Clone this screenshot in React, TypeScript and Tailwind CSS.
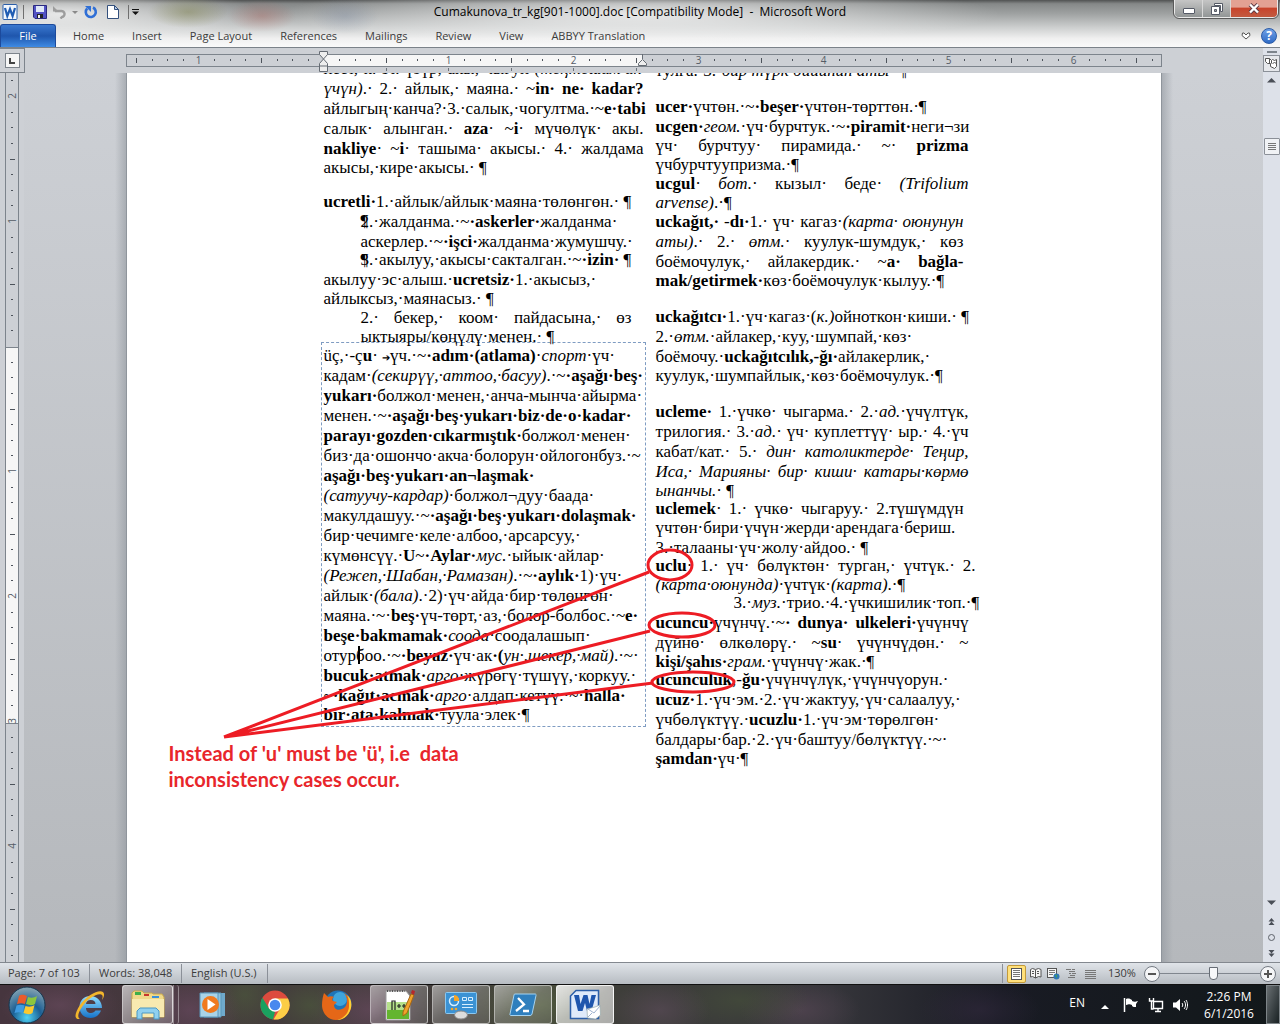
import React from "react";

type LineData = {
  t: string;
  h?: 15 | 18 | 19 | 20;
  just?: "wide" | "mid" | "narrow";
  indent?: boolean;
  far?: boolean;
  gap?: boolean;
};

const HEIGHTS = { 15: "h-[15px]", 18: "h-[18px]", 19: "h-[19px]", 20: "h-5" };
const WIDTHS = { wide: "w-[320px]", mid: "w-[313px]", narrow: "w-[308px]" };

/* "*bold*", "_italic_", a blank is drawn as a space mark, "#" is a plain blank */
function Rich({ text, just }: { text: string; just: boolean }) {
  const marks = (s: string) => s.replace(/ /g, just ? "· " : "·").replace(/#/g, " ");
  return (
    <>
      {text.split(/(\*[^*]*\*|_[^_]*_|➔)/).map((part, i) => {
        if (part === "➔") return <span key={i} className="text-[10px]">➔</span>;
        if (part.startsWith("*")) return <b key={i}>{marks(part.slice(1, -1))}</b>;
        if (part.startsWith("_")) return <i key={i}>{marks(part.slice(1, -1))}</i>;
        return <React.Fragment key={i}>{marks(part)}</React.Fragment>;
      })}
    </>
  );
}

function Line({ l }: { l: LineData }) {
  const cls = [
    HEIGHTS[l.h ?? 20],
    "whitespace-nowrap",
    l.indent ? "ml-[37px]" : "",
    l.far ? "ml-[78px]" : "",
    l.gap ? "mb-4" : "",
    l.just ? "[text-align-last:justify]" : "",
    l.just ? (l.indent ? "w-[271px]" : WIDTHS[l.just]) : "",
  ].join(" ");
  return (
    <p className={cls}>
      <Rich text={l.t} just={!!l.just} />
    </p>
  );
}

const leftTop: LineData[] = [
  { t: "иеет, к. эт. үзүр, акы, чыгуп _(теңтешим ин_" },
  { t: "_үчүн)_. 2. айлык, маяна. ~*in ne kadar?*", just: "wide" },
  { t: "айлыгың канча? 3. салык, чогултма. ~*e tabi*" },
  { t: "салык алынган. *aza* ~*i* мүчөлүк акы.", just: "wide" },
  { t: "*nakliye* ~*i* ташыма акысы. 4. жалдама", just: "wide", h: 19 },
  { t: "акысы, кире акысы. #¶", gap: true, h: 18 },
  { t: "*ucretli *1. айлык/айлык маяна төлөнгөн. #¶" },
  { t: "2. жалданма. ~* askerler *жалданма ", indent: true },
  { t: "аскерлер. ~* işci *жалданма жумушчу. ", indent: true, h: 18 },
  { t: "3. акылуу, акысы сакталган. ~* izin *#¶", indent: true },
  { t: "акылуу эс алыш. *ucretsiz *1. акысыз, ", h: 19 },
  { t: "айлыксыз, маянасыз. #¶", h: 19 },
  { t: "2. бекер, коом пайдасына, өз", indent: true, just: "mid", h: 19 },
  { t: "ыктыяры/көңүлү менен. #¶", indent: true, h: 15 },
];

const frameLines: LineData[] = [
  { t: "üç, -ç*u* #➔үч. ~* adım (atlama)* _спорт_ үч " },
  { t: "кадам _(секирүү, аттоо, басуу)_. ~* aşağı beş *" },
  { t: "*yukarı *болжол менен, анча-мынча айырма " },
  { t: "менен. ~* aşağı beş yukarı biz de o kadar *" },
  { t: "*parayı gozden cıkarmıştık *болжол менен " },
  { t: "биз да ошончо акча болорун ойлогонбуз. ~" },
  { t: "*aşağı beş yukarı an¬laşmak *" },
  { t: "_(сатуучу-кардар)_ болжол¬дуу баада " },
  { t: "макулдашуу. ~* aşağı beş yukarı dolaşmak *" },
  { t: "бир чечимге келе албоо, арсарсуу, " },
  { t: "күмөнсүү. *U*~* Aylar *_мус._ ыйык айлар " },
  { t: "_(Режеп, Шабан, Рамазан)_. ~* aylık *1) үч " },
  { t: "айлык _(бала)_. 2) үч айда бир төлөнгөн " },
  { t: "маяна. ~ *beş *үч-төрт, аз, болор-болбос. ~*e *" },
  { t: "*beşe bakmamak *_соода_ соодалашып " },
  { t: "отурбоо. ~* beyaz *үч ак* (*_ун ,шекер, май)_. ~ " },
  { t: "*bucuk atmak *_арго_ жүрөгү түшүү, коркуу. " },
  { t: "~* kağıt acmak *_арго_ алдап кетүү. ~ *halla *", h: 19 },
  { t: "*bir ata kalmak *туула элек ¶" },
];

const rightLines: LineData[] = [
  { t: "тулга. 3. _бир түрк бийинин аты_ #¶", gap: true },
  { t: "*ucer *үчтөн. ~* beşer *үчтөн-төрттөн. ¶" },
  { t: "*ucgen *_геом._ үч бурчтук. ~* piramit *неги¬зи", h: 19 },
  { t: "үч бурчтуу пирамида. ~ *prizma*", just: "mid", h: 19 },
  { t: "үчбурчтуупризма. ¶", h: 19 },
  { t: "*ucgul* _бот._ кызыл беде _(Trifolium_", just: "mid", h: 19 },
  { t: "_arvense)_. ¶", h: 19 },
  { t: "*uckağıt, *-*dı·*1.·#үч·#кагаз·_(карта·#оюнунун_", just: "narrow" },
  { t: "_аты)_. 2. _өтм._ куулук-шумдук, көз", just: "narrow" },
  { t: "боёмочулук, айлакердик. ~*a bağla-*", just: "narrow", h: 19 },
  { t: "*mak/getirmek *көз боёмочулук кылуу. ¶", gap: true },
  { t: "*uckağıtcı *1. үч кагаз (_к.)_ойноткон киши. #¶" },
  { t: "2. _өтм._ айлакер, куу, шумпай, көз " },
  { t: "боёмочу. *uckağıtcılık,-ğı *айлакерлик, ", h: 19 },
  { t: "куулук, шумпайлык, көз боёмочулук. ¶", gap: true },
  { t: "*ucleme·*#1.·үчкө·#чыгарма.·#2.·_ад._·үчүлтүк,", just: "mid" },
  { t: "трилогия.·#3.·_ад._·#үч·#куплеттүү·#ыр.·#4.·үч", just: "mid" },
  { t: "кабат/кат. 5. _дин католиктерде Теңир,_", just: "mid" },
  { t: "_Иса,·#Марияны·#бир·#киши·#катары·көрмө_", just: "mid", h: 19 },
  { t: "_ынанчы._ #¶", h: 18 },
  { t: "*uclemek* 1. үчкө чыгаруу. 2.түшүмдүн", just: "narrow", h: 19 },
  { t: "үчтөн бири үчүн жерди арендага бериш." },
  { t: "3. талааны үч жолу айдоо. #¶", h: 18 },
  { t: "*uclu* 1. үч бөлүктөн турган, үчтүк. 2.", just: "wide", h: 19 },
  { t: "_(карта оюнунда)_ үчтүк _(карта)_. ¶", h: 18 },
  { t: "3. _муз._ трио. 4. үчкишилик топ. ¶", far: true },
  { t: "*ucuncu·*үчүнчү.·~*·#dunya·#ulkeleri·*үчүнчү", just: "mid" },
  { t: "дүйнө өлкөлөрү. ~*su* үчүнчүдөн. ~", just: "mid", h: 19 },
  { t: "*kişi/şahıs *_грам._ үчүнчү жак. ¶", h: 18 },
  { t: "*ucunculuk*,-*ğu *үчүнчүлүк, үчүнчүорун. " },
  { t: "*ucuz *1. үч эм. 2. үч жактуу, үч салаалуу, " },
  { t: "үчбөлүктүү. *ucuzlu *1. үч эм төрөлгөн " },
  { t: "балдары бар. 2. үч баштуу/бөлүктүү. ~ ", h: 19 },
  { t: "*şamdan *үч ¶" },
];

const tabs = ["Home", "Insert", "Page Layout", "References", "Mailings", "Review", "View", "ABBYY Translation"];

function WordMark() {
  return (
    <svg width="16" height="16" viewBox="0 0 16 16">
      <rect x="1" y="0.5" width="14" height="15" rx="1" fill="#f2f7fd" stroke="#2b5ea8" />
      <path d="M3 4l2.300 8L8 5l2.600 7L13 4" fill="none" stroke="#1f5cb3" strokeWidth="2.2" />
    </svg>
  );
}

function TitleBar() {
  return (
    <div className="relative flex h-6 items-start">
      <div className="flex h-6 items-center gap-[5px] pl-0.5">
        <WordMark />
        <span className="h-3.5 w-px bg-[#6f6f6f]" />
        <button aria-label="Save" className="ml-1">
          <svg width="14" height="14" viewBox="0 0 14 14">
            <path d="M.5.5h13v13H2l-1.500-1.500z" fill="#5252c4" stroke="#2a2a80" />
            <rect x="3" y="1" width="8" height="6" fill="#dfe8f8" />
            <rect x="4" y="9" width="6" height="4" fill="#222" />
            <rect x="5" y="10" width="2" height="3" fill="#eee" />
          </svg>
        </button>
        <button aria-label="Undo" className="ml-px">
          <svg width="14" height="13" viewBox="0 0 14 13">
            <path d="M2 5h6a3 3 0 0 1 1 6l-1.500 1.500" fill="none" stroke="#9d9d9d" strokeWidth="2.4" />
            <path d="M0 5.500V0l6 6z" fill="#9d9d9d" />
          </svg>
        </button>
        <svg width="6" height="3" viewBox="0 0 6 3"><path d="M0 0h6L3 3z" fill="#8a8a8a" /></svg>
        <button aria-label="Repeat" className="ml-px">
          <svg width="14" height="14" viewBox="0 0 14 14">
            <path d="M9 2.500A5 5 0 1 1 3.200 3.500" fill="none" stroke="#2f6fd6" strokeWidth="2.6" />
            <path d="M1 1h6v6z" fill="#2f6fd6" />
          </svg>
        </button>
        <button aria-label="New" className="ml-1">
          <svg width="12" height="14" viewBox="0 0 12 14">
            <path d="M.5.5h7l4 4v9H.5z" fill="#fff" stroke="#33507d" />
            <path d="M7.500.5v4h4z" fill="#b9cdea" stroke="#33507d" />
          </svg>
        </button>
        <span className="ml-1 h-3.5 w-px bg-[#6f6f6f]" />
        <button aria-label="Customize Quick Access Toolbar" className="-ml-0.5">
          <svg width="7" height="6" viewBox="0 0 7 6"><path d="M0 .5h7" stroke="#111" /><path d="M0 2.500h7L3.500 6z" fill="#111" /></svg>
        </button>
      </div>
      <h1 className="pointer-events-none absolute inset-x-0 top-0 text-center text-[12px] leading-6 whitespace-pre text-black">
        {"Cumakunova_tr_kg[901-1000].doc [Compatibility Mode]  -  Microsoft Word"}
      </h1>
      <div className="ml-auto mr-0.5 flex h-[18px] overflow-hidden rounded-b-[5px] border border-t-0 border-[#e9e9e9] outline outline-1 outline-[#5a5a5a]">
        <button aria-label="Minimize" className="flex w-7 items-center justify-center border-r border-[#d8d8d8] bg-linear-to-b from-[#c5c5c5] to-[#929696]">
          <span className="mt-1 h-1.5 w-3 rounded-[1px] border border-[#555a66] bg-white" />
        </button>
        <button aria-label="Restore" className="flex w-7 items-center justify-center border-r border-[#d8d8d8] bg-linear-to-b from-[#c5c5c5] to-[#929696]">
          <svg width="12" height="12" viewBox="0 0 12 12">
            <path d="M3.500.5h8v8h-2v-6h-6z" fill="#fff" stroke="#555a66" />
            <path d="M.5 3.500h8v8h-8zM3.500 6.500v2h2v-2z" fill="#fff" fillRule="evenodd" stroke="#555a66" />
          </svg>
        </button>
        <button aria-label="Close" className="flex w-[46px] items-center justify-center bg-linear-to-b from-[#e3a193] from-40% via-[#c8442c] via-50% to-[#c25a40]">
          <svg width="12" height="11" viewBox="0 0 12 11">
            <path d="M2 1.500l8 8M10 1.500l-8 8" stroke="#5b3a44" strokeWidth="4" />
            <path d="M2 1.500l8 8M10 1.500l-8 8" stroke="#fff" strokeWidth="2.4" />
          </svg>
        </button>
      </div>
    </div>
  );
}

function Ribbon() {
  return (
    <div className="flex h-[23px] items-stretch text-[11px] text-[#3b3b3b]">
      <button className="mr-[3px] w-14 rounded-t-[3px] border border-b-0 border-[#1c4a9c] bg-linear-to-b from-[#3a78cf] via-[#1f56ad] to-[#3f8be4] text-white">
        File
      </button>
      <nav className="flex">
        {tabs.map((t) => (
          <button key={t} className="px-[14px] pt-px">{t}</button>
        ))}
      </nav>
      <div className="ml-auto flex items-center gap-2.5 pr-[3px]">
        <button aria-label="Minimize the Ribbon">
          <svg width="10" height="8" viewBox="0 0 10 8">
            <path d="M1.500 1l1.500 0 2 2 2-2h1.500l.5 2.500-4 3.500-4-3.500z" fill="#fff" stroke="#555" />
          </svg>
        </button>
        <button aria-label="Help" className="size-4 rounded-full border border-[#2b5ba6] bg-linear-to-b from-[#6ea0e6] to-[#2f6bc6] text-[12px] leading-[14px] font-bold text-white">
          ?
        </button>
      </div>
    </div>
  );
}

function HRuler() {
  const ticks: React.ReactNode[] = [];
  for (let k = -12; k <= 53; k++) {
    const x = 197.5 + k * 15.625;
    if (x < 6 || x > 1030) continue;
    if (k % 8 === 0) {
      if (k !== 0)
        ticks.push(
          <text key={k} x={x} y="10" textAnchor="middle" fontSize="10" fill="#555c66">
            {Math.abs(k / 8)}
          </text>,
        );
    } else {
      const long = k % 4 === 0;
      const px = Math.round(x);
      ticks.push(<rect key={k} x={px} y={long ? 4 : 5} width="1" height={long ? 5 : 2} fill="#4d535b" />);
    }
  }
  return (
    <svg width="1036" height="25" viewBox="0 -6 1036 25" className="shrink-0">
      <rect x="0.5" y="0.5" width="1035" height="12" fill="#cdd0d5" stroke="#7d848c" />
      <rect x="198" y="1" width="319" height="11" fill="#f6f6f6" />
      {ticks}
      {[260, 322, 385, 447, 510].map((x) => (
        <rect key={x} x={x} y="14" width="1" height="3" fill="#6d737b" />
      ))}
      <path d="M193.500-2.500h8v3l-4 4.500 4 4.500v8h-8v-8l4-4.500-4-4.500z" fill="#eee" stroke="#666c74" />
      <path d="M193.500 12h8" stroke="#666c74" />
      <path d="M512.500 11.500v-2l4-4 4 4v2z" fill="#eee" stroke="#666c74" />
      <path d="M516.500 0v5" stroke="#666c74" />
    </svg>
  );
}

function VRuler() {
  const ticks: React.ReactNode[] = [];
  for (let k = -17; k <= 39; k++) {
    const y = 274 + k * 15.625;
    if (y < 3 || y > 885) continue;
    if (k % 8 === 0) {
      if (k !== 0)
        ticks.push(
          <text key={k} transform={`translate(11 ${Math.round(y - 1)}) rotate(-90)`} textAnchor="middle" fontSize="10" fill="#555c66">
            {Math.abs(k / 8)}
          </text>,
        );
    } else {
      const long = k % 4 === 0;
      ticks.push(<rect key={k} x={long ? 5 : 6} y={Math.round(y - 1)} width={long ? 5 : 2} height="1" fill="#4d535b" />);
    }
  }
  return (
    <svg width="14" height="889" viewBox="0 0 14 889" className="ml-[5px] shrink-0">
      <rect x="0.5" y="-2" width="13" height="893" fill="#cdd0d5" stroke="#7d848c" />
      <rect x="1" y="274" width="12" height="377" fill="#f6f6f6" />
      <path d="M1 274.500h12M1 650.500h12" stroke="#7d848c" />
      {ticks}
    </svg>
  );
}

function Page() {
  return (
    <article className="relative flex h-full w-[1034px] shrink-0 overflow-hidden bg-white pl-[197px] font-['Liberation_Serif',serif] text-[17px] leading-5 text-black">
      <div className="-mt-[14px] w-[332px] shrink-0">
        {leftTop.map((l, i) => <Line key={i} l={l} />)}
        <div className="-ml-[3px] w-[325px] border border-dashed border-[#7f9cc2] pt-[3px] pb-px pl-0.5">
          {frameLines.map((l, i) => <Line key={i} l={l} />)}
        </div>
      </div>
      <div className="-mt-3 shrink-0">
        {rightLines.map((l, i) => <Line key={i} l={l} />)}
      </div>
      <span className="absolute top-[573px] left-[231px] h-[18px] w-0.5 bg-black" />
      <span className="absolute top-[138px] left-[234px]">¶</span>
      <span className="absolute top-[177px] left-[234px]">¶</span>
      <svg className="absolute top-0 left-0" width="1034" height="889" fill="none" stroke="#ed1c24" strokeWidth="3">
        <path d="M97 664L522 499M97 664L523 558M97 664L526 610" />
        <ellipse cx="543" cy="492" rx="22" ry="15" />
        <ellipse cx="555" cy="552" rx="33" ry="12" />
        <ellipse cx="566" cy="609" rx="41" ry="10" />
      </svg>
      <p className="absolute top-[667px] left-[42px] font-['Lato',sans-serif] text-[20px] leading-[26px] font-bold whitespace-pre text-[#e8262b]">
        {"Instead of 'u' must be 'ü', i.e  data\ninconsistency cases occur."}
      </p>
    </article>
  );
}

function ScrollBar() {
  const arrow = (d: string) => (
    <svg width="9" height="9" viewBox="0 0 9 9"><path d={d} fill="#4a4f57" /></svg>
  );
  return (
    <div className="flex w-[17px] shrink-0 flex-col items-center bg-[#dde1e9]">
      <span className="mt-[3px] h-0.5 w-2.5 bg-[#7d848c]" />
      <button aria-label="View Ruler" className="mt-0.5 flex size-[17px] shrink-0 items-center justify-center border border-[#8b9098] bg-[#e6e8ec]">
        <svg width="13" height="13" viewBox="0 0 13 13" fill="#fff" stroke="#555">
          <path d="M.5 1.500h4l2 2 1-1 2 1 2-1v7l-2 2-4-2v-3h-3l-2-2z" /><path d="M4.500 1.500v5M7.500 6.500l2-1 2 1M6.500 3.500v3" />
        </svg>
      </button>
      <button aria-label="Scroll up" className="mt-1">{arrow("M0 6.500L4.500 2 9 6.500z")}</button>
      <button aria-label="Scroll thumb" className="mt-[53px] flex h-[17px] w-4 shrink-0 items-center justify-center rounded-[1px] border border-[#8b9098] bg-[#f0f2f5]">
        <svg width="8" height="8" viewBox="0 0 8 8"><path d="M0 .5h8M0 2.500h8M0 4.500h8M0 6.500h8" stroke="#777" /></svg>
      </button>
      <div className="mt-auto flex flex-col items-center gap-2 pb-1">
        <button aria-label="Scroll down" className="mb-0.5">{arrow("M0 2.500h9L4.500 7z")}</button>
        <button aria-label="Previous Page">{arrow("M1.500 4.500l3-3.500 3 3.500zM1.500 8l3-3.500 3 3.500z")}</button>
        <button aria-label="Select Browse Object" className="size-[7px] rounded-full border border-[#5d626a]" />
        <button aria-label="Next Page">{arrow("M1.500 1l3 3.500 3-3.500zM1.500 4.500l3 3.500 3-3.500z")}</button>
      </div>
    </div>
  );
}

function StatusBar() {
  return (
    <footer className="flex h-[22px] shrink-0 items-center border-t border-[#83888f] bg-linear-to-b from-[#e0e4e9] to-[#b7bcc2] text-[11px] text-[#3b3b3b]">
      <span className="w-[89px] pl-2">Page: 7 of 103</span>
      <span className="h-[19px] w-px bg-[#8b9098]" />
      <span className="w-[91px] pl-[9px]">Words: 38,048</span>
      <span className="h-[19px] w-px bg-[#8b9098]" />
      <span className="w-[85px] pl-[9px]">English (U.S.)</span>
      <span className="h-[19px] w-px bg-[#8b9098]" />
      <div className="ml-auto flex items-center">
        <span className="mr-1 h-[19px] w-px bg-[#8b9098]" />
        <button aria-label="Print Layout" className="flex h-[18px] w-[19px] items-center justify-center rounded-[2px] border border-[#c29a3b] bg-[#ffe07a]">
          <svg width="13" height="12" viewBox="0 0 13 12">
            <rect x="1.500" y=".5" width="10" height="11" fill="#fff" stroke="#555" />
            <path d="M3 2.500h7M3 4.500h7M3 6.500h7M3 8.500h7" stroke="#777" />
          </svg>
        </button>
        <button aria-label="Full Screen Reading" className="ml-1">
          <svg width="12" height="11" viewBox="0 0 12 11" fill="#f5f5f5" stroke="#555">
            <path d="M.5 1.500l2-1 3 1 3-1 2.500 1v7.500l-2.500-.5-3 1.500-3-1.500-2 .5zM5.500 2v8M2 3.500h2M2 5.500h2M7 3.500h2M7 5.500h2" />
          </svg>
        </button>
        <button aria-label="Web Layout" className="ml-[5px]">
          <svg width="13" height="12" viewBox="0 0 13 12">
            <rect x=".5" y=".5" width="9" height="9" fill="#f5f5f5" stroke="#555" />
            <path d="M2 2.500h6M2 4.500h6M2 6.500h4" stroke="#777" />
            <circle cx="9.500" cy="8.500" r="3" fill="#2f78b5" /><path d="M8 7h2v3z" fill="#47a34f" />
          </svg>
        </button>
        <button aria-label="Outline" className="ml-1.5">
          <svg width="11" height="10" viewBox="0 0 11 10"><path d="M0 .5h5M6 .5h3M3 2.500h6M3 4.500h2M6 4.500h4M4 6.500h5M2 8.500h7" stroke="#777" /></svg>
        </button>
        <button aria-label="Draft" className="ml-2">
          <svg width="11" height="10" viewBox="0 0 11 10"><path d="M0 1.500h11M0 3.500h11M0 5.500h11M0 7.500h11M0 9.500h11" stroke="#777" /></svg>
        </button>
        <button className="ml-3 w-[30px] text-left">130%</button>
        <button aria-label="Zoom Out" className="ml-1.5 flex size-4 items-center justify-center rounded-full border border-[#737982] bg-[#f4f5f7]">
          <span className="h-0.5 w-2 bg-[#555]" />
        </button>
        <input
          type="range"
          aria-label="Zoom"
          min="0"
          max="100"
          defaultValue="54"
          className="h-4 w-[100px] appearance-none bg-[linear-gradient(#80868e,#80868e)] bg-[length:100%_1px] bg-center bg-no-repeat [&::-webkit-slider-thumb]:h-[13px] [&::-webkit-slider-thumb]:w-[9px] [&::-webkit-slider-thumb]:appearance-none [&::-webkit-slider-thumb]:rounded-b-[4px] [&::-webkit-slider-thumb]:border [&::-webkit-slider-thumb]:border-[#666c75] [&::-webkit-slider-thumb]:bg-[#f7f8fa]"
        />
        <button aria-label="Zoom In" className="mr-1 flex size-4 items-center justify-center rounded-full border border-[#737982] bg-[#f4f5f7]">
          <svg width="8" height="8"><path d="M0 4h8M4 0v8" stroke="#555" strokeWidth="2" /></svg>
        </button>
      </div>
    </footer>
  );
}

const taskIcons: { name: string; state: "idle" | "stack" | "run" | "active"; icon: React.ReactNode }[] = [
  {
    name: "Internet Explorer",
    state: "idle",
    icon: (
      <svg width="32" height="32" viewBox="0 0 32 32">
        <defs><linearGradient id="ie" x1="0" y1="0" x2="0" y2="1"><stop offset="0" stopColor="#8edcff" /><stop offset="1" stopColor="#1673c9" /></linearGradient></defs>
        <path d="M29 19H13c0 3 2 5 5 5 2 0 3.500-1 4.500-2.500H28C26.500 26 22.500 29 17.500 29 11 29 6.500 24.500 6.500 18S11 7 17.500 7 29 12 29 19zM13 15h9.500c0-2.500-2-4-4.700-4S13.300 12.500 13 15z" fill="url(#ie)" />
        <path d="M7 30C1 31 1 25 7 16 14 6 26 0 30 3c2 2 1 5-1 8 1-3 1-5-1-5.500C24 4 14 10 9 18c-4 6-5 10-2 12z" fill="#f3b62c" />
      </svg>
    ),
  },
  {
    name: "Windows Explorer",
    state: "stack",
    icon: (
      <svg width="34" height="30" viewBox="0 0 34 30">
        <path d="M1 3l2-2h8l2 2h8l1 1h9l2 3v20H1z" fill="#f0d98a" stroke="#c9a94c" />
        <path d="M4 2h6v3H4z" fill="#3fae49" /><path d="M13 4h5v2h-5z" fill="#c8372d" /><path d="M21 6h7v2h-7z" fill="#3a8fd9" />
        <path d="M1 9h32v18H1z" fill="#f8eab0" />
        <path d="M6 29v-8l3-3h16l3 3v8h-5v-6H11v6z" fill="#8fd0ef" stroke="#4b98c4" />
      </svg>
    ),
  },
  {
    name: "Windows Media Player",
    state: "idle",
    icon: (
      <svg width="28" height="28" viewBox="0 0 28 28">
        <path d="M8 2h18v23H8z" fill="#6fa9cc" /><path d="M5 2h17v24H5z" fill="#8fc3df" stroke="#5b97ba" />
        <path d="M1 2h18v24H1z" fill="#a9d3e8" stroke="#5b97ba" />
        <circle cx="11.500" cy="13.500" r="8.500" fill="#f07a1f" /><path d="M8.500 8v11l8-5.500z" fill="#fff" />
      </svg>
    ),
  },
  {
    name: "Google Chrome",
    state: "idle",
    icon: (
      <svg width="30" height="30" viewBox="0 0 30 30">
        <circle cx="15" cy="15" r="14.500" fill="#dd4b3e" />
        <path d="M2.400 7.700L9 18.500 15 22l-2 7.400A14.500 14.500 0 0 1 2.400 7.700z" fill="#1aa15f" />
        <path d="M15 8.500h13a14.500 14.500 0 0 1-14.500 21L20.500 18z" fill="#fccd46" />
        <circle cx="15" cy="15" r="6.800" fill="#fff" /><circle cx="15" cy="15" r="5.300" fill="#4a88ee" />
      </svg>
    ),
  },
  {
    name: "Firefox",
    state: "idle",
    icon: (
      <svg width="30" height="30" viewBox="0 0 30 30">
        <circle cx="16" cy="14" r="13.500" fill="#1e74b8" /><circle cx="18" cy="9" r="7" fill="#3fa5dd" />
        <path d="M2 3l4 4c2-1 4-1 6 0-2 1-2 3-1 4l4 1-3 3c0 4 4 6 8 4 3-1 5-4 5-8 0-3-1-6-3-8 5 3 8 8 7 14-1 8-7 13-15 13C6 30 0 23 0 15 0 10 1 6 2 3z" fill="#e56717" />
        <path d="M25 5c4 3 5 8 4 13-2 8-8 12-14 12 8-2 12-8 12-14 0-4 0-8-2-11z" fill="#ffcf33" />
      </svg>
    ),
  },
  {
    name: "Notepad++",
    state: "run",
    icon: (
      <svg width="32" height="32" viewBox="0 0 32 32">
        <path d="M3 2h20l4 5v24H3z" fill="#fff" stroke="#999" /><path d="M4 19h22v11H4z" fill="#64b52f" /><path d="M4 13h22v8H4z" fill="#b5e08a" />
        <path d="M4 2h18" stroke="#555" strokeDasharray="1 1.500" strokeWidth="2" />
        <path d="M9 21v-9h3v9M14 17h4M16 15v4M19 17h4M21 15v4" fill="none" stroke="#222" strokeWidth="1.200" />
        <path d="M20 23l8-18 3 1-7 18-4 3z" fill="#f0a22c" stroke="#a86612" /><path d="M28 4l1-3 3 1-1 4z" fill="#b8262b" />
      </svg>
    ),
  },
  {
    name: "Control Panel",
    state: "run",
    icon: (
      <svg width="32" height="30" viewBox="0 0 32 30">
        <rect x=".5" y="2.500" width="31" height="21" rx="1" fill="#3b92d4" stroke="#8cc8f0" />
        <circle cx="9" cy="11" r="4.500" fill="none" stroke="#d8efff" strokeWidth="1.500" /><path d="M9 11V5a5 5 0 0 1 5 6z" fill="#f6a528" />
        <path d="M17.500 7.500h4v3h-4zM23.500 7.500h4v3h-4zM17 14.500h11M17 17.500h11" fill="none" stroke="#d8efff" /><circle cx="7" cy="19" r="1.300" fill="#f6a528" /><circle cx="11" cy="19" r="1.300" fill="#f6a528" />
        <ellipse cx="16" cy="25" rx="6.500" ry="4" fill="#dcdcdc" stroke="#888" />
      </svg>
    ),
  },
  {
    name: "PowerShell",
    state: "run",
    icon: (
      <svg width="28" height="24" viewBox="0 0 28 24">
        <path d="M6 1h20a1 1 0 0 1 1 1.500L23 21a2 2 0 0 1-2 1.500H2A1 1 0 0 1 1 21L5 2a1 1 0 0 1 1-1z" fill="#2f7fbd" stroke="#a5d3f0" />
        <path d="M9 5l6 6.500-8 6.500M14 18h6" fill="none" stroke="#fff" strokeWidth="2.300" />
      </svg>
    ),
  },
  {
    name: "Microsoft Word",
    state: "active",
    icon: (
      <svg width="32" height="32" viewBox="0 0 32 32">
        <path d="M7 1.500h22.500v28h-28V7z" fill="#dfeafa" stroke="#2b5ea8" strokeWidth="1.500" />
        <path d="M5 6h5l1.500 9L14.500 6h4l2 9L22.500 6h4.500l-4.500 16h-4.500l-2-8-2.500 8H9z" fill="#1f56ad" />
        <path d="M18 20l8-2 5-2 .5 10-5 4-8-1z" fill="#fff" stroke="#9aa" strokeWidth=".7" />
        <path d="M19 20l6 4 6-7M19 28l4-4" fill="none" stroke="#9fb2ce" />
      </svg>
    ),
  },
];

const STATES = {
  idle: "",
  stack: "rounded-[3px] border border-[#ffffff90] bg-linear-to-br from-[#ffffffa0] to-[#ffffff30]",
  run: "rounded-[3px] border border-[#ffffff80] bg-linear-to-br from-[#ffffff80] via-[#ffffff38] to-[#ffffff20]",
  active: "rounded-[3px] border border-[#ffffffd0] bg-linear-to-br from-[#ffffffd8] via-[#ffffffa0] to-[#ffffff90]",
};

function TaskBar() {
  return (
    <div className="flex h-10 shrink-0 items-stretch border-t border-[#111] bg-[#2b2429] bg-[radial-gradient(60px_30px_at_60px_20px,#6a4c60a0,transparent),radial-gradient(50px_40px_at_190px_25px,#6b4a62a0,transparent),radial-gradient(40px_40px_at_245px_10px,#4c5a3ca0,transparent),radial-gradient(40px_30px_at_310px_20px,#4c5a3ca0,transparent),radial-gradient(60px_40px_at_370px_25px,#6b4a62a0,transparent),radial-gradient(80px_40px_at_540px_20px,#55643ca0,transparent),radial-gradient(50px_30px_at_660px_25px,#5c4c5aa0,transparent),radial-gradient(70px_30px_at_740px_15px,#46503aa0,transparent),radial-gradient(60px_30px_at_800px_25px,#5a4858a0,transparent),radial-gradient(60px_30px_at_980px_25px,#30283ca0,transparent),linear-gradient(90deg,#46353e,#40403a_45%,#35353a_65%,#191b24_78%,#12181a)] text-white">
      <button aria-label="Start" className="flex w-[58px] items-center pl-[7px]">
        <svg width="40" height="38" viewBox="0 0 40 38">
          <defs><radialGradient id="orb" cx=".5" cy=".85" r=".8"><stop offset="0" stopColor="#4fd3f5" /><stop offset=".5" stopColor="#1c5f94" /><stop offset="1" stopColor="#7f9fb0" /></radialGradient></defs>
          <circle cx="20" cy="19" r="18" fill="url(#orb)" stroke="#15364f" />
          <path d="M12 10c3-2 5-1 8 0l-2 8c-3-1-5-1-8 0z" fill="#ea5b2b" />
          <path d="M21 11c3 1 6 1 9-1l-2 8c-3 2-6 1-9 0z" fill="#8cc63e" />
          <path d="M9.500 19.500c3-1 5-1 8 0l-2 7.500c-2-1-5-1-8 0z" fill="#3f9be0" />
          <path d="M18.500 20c3 1 6 1 9-1l-2 8c-3 2-6 1-9 0z" fill="#fcc92f" />
        </svg>
      </button>
      <div className="ml-0.5 flex gap-1">
        {taskIcons.map((t) => (
          <div key={t.name} className="flex w-[58px]">
            <button aria-label={t.name} className={"flex grow items-center justify-center " + STATES[t.state]}>
              {t.icon}
            </button>
            {t.state === "stack" && <span className="mr-px w-1.5 rounded-r-[3px] border-x border-[#ffffff60]" />}
          </div>
        ))}
      </div>
      <div className="ml-auto flex items-center text-[12px]">
        <span className="mr-4 -mt-1">EN</span>
        <svg className="mt-1 mr-[14px]" width="8" height="5" viewBox="0 0 8 5"><path d="M0 5l4-4 4 4z" fill="#fff" /></svg>
        <svg className="mr-[9px]" width="16" height="16" viewBox="0 0 16 16">
          <path d="M1.500 1v14" stroke="#fff" strokeWidth="1.500" /><path d="M3 2c3-1 4 0 6 1v5C7 7 6 7 3 8zM9 4c2 1 3 1 6 0l-2 3v3c-2 0-3 0-4-1z" fill="#fff" />
        </svg>
        <svg className="mr-[9px]" width="16" height="16" viewBox="0 0 16 16" fill="none" stroke="#fff">
          <path d="M5.500 4.500h9v7h-9zM7 14.500h6M10 12v2" strokeWidth="1.400" /><path d="M1.500 1v3h4V1M3.500 4v8h2" strokeWidth="1.400" />
        </svg>
        <svg className="mr-4" width="15" height="14" viewBox="0 0 15 14">
          <path d="M0 4.500h3L7 1v12L3 9.500H0z" fill="#fff" /><path d="M9 5c1 1 1 3 0 4M11 3c2 2 2 6 0 8M13 2c2 3 2 7 0 10" fill="none" stroke="#fff" />
        </svg>
        <time className="w-[50px] text-center leading-[17px] whitespace-nowrap">2:26 PM<br />6/1/2016</time>
        <button aria-label="Show desktop" className="ml-3 h-full w-[14px] border border-[#7d8488] bg-linear-to-br from-[#6a7073] to-[#1a2224]" />
      </div>
    </div>
  );
}

export default function App() {
  return (
    <div className="flex h-screen flex-col overflow-hidden bg-[#c4c7cb] font-['Open_Sans','Noto_Sans',sans-serif]">
      <header className="shrink-0 bg-[radial-gradient(40px_16px_at_188px_12px,#80835080,transparent),radial-gradient(34px_16px_at_262px_16px,#b0605858,transparent),radial-gradient(34px_18px_at_345px_16px,#6a7c9c40,transparent),radial-gradient(200px_30px_at_60px_14px,#ffffffc0,transparent),radial-gradient(360px_30px_at_640px_14px,#ffffffc0,transparent),linear-gradient(180deg,#505252,#858888_8%,#a0a3a3_30%,#cfd1d1_60%,#f0f0f0_82%,#fafafa)]">
        <TitleBar />
        <Ribbon />
      </header>
      <div className="flex min-h-0 flex-1 border-t border-[#7b8289]">
        <div className="flex min-w-0 flex-1 flex-col">
          <div className="flex h-[25px] shrink-0 bg-[#cdd0d5]">
            <button aria-label="Tab selector" className="flex w-[25px] shrink-0 items-center justify-center border border-l-0 border-[#7d848c]">
              <span className="flex size-[15px] items-center justify-center border border-[#7d848c] bg-[#f6f6f6]">
                <span className="size-1.5 border-b-2 border-l-2 border-[#444]" />
              </span>
            </button>
            <div className="-ml-px flex flex-1 justify-center overflow-hidden"><HRuler /></div>
          </div>
          <div className="flex min-h-0 flex-1 overflow-hidden bg-linear-to-b from-[#cdd0d5] to-[#b5b8bc]">
            <div className="w-6 shrink-0 bg-[#cdd0d5]"><VRuler /></div>
            <main className="flex min-w-0 flex-1 justify-center">
              <div className="w-3 shrink-0 border-r border-[#8f959c] bg-linear-to-l from-[#8f959c90] to-transparent" />
              <Page />
              <div className="w-3 shrink-0 border-l border-[#8f959c] bg-linear-to-r from-[#8f959c90] to-transparent" />
            </main>
          </div>
        </div>
        <ScrollBar />
      </div>
      <StatusBar />
      <TaskBar />
    </div>
  );
}
